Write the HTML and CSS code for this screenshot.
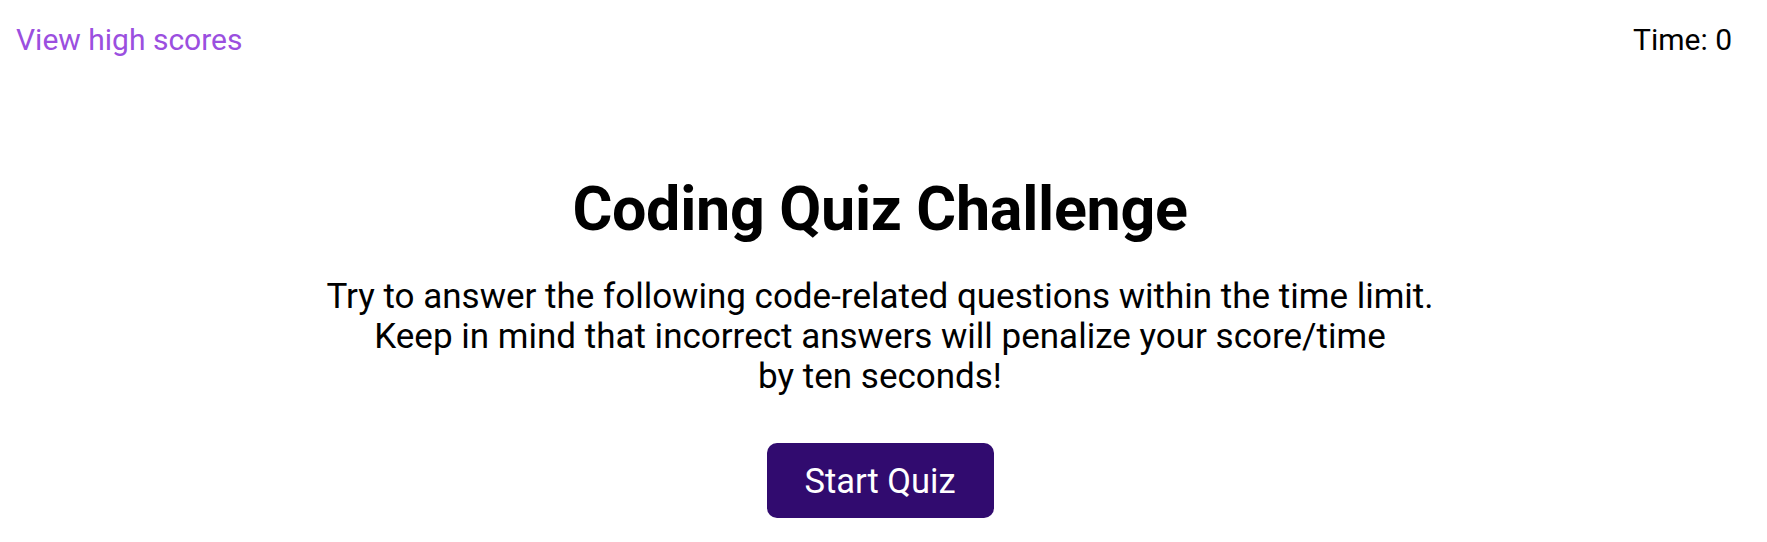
FILE: index.html
```html
<!DOCTYPE html>
<html lang="en">
<head>
<meta charset="utf-8">
<title>Coding Quiz</title>
<link rel="stylesheet" href="styles.css">
</head>
<body>
<header class="topbar">
  <a class="highscores" href="#">View high scores</a>
  <div class="timer">Time: <span>0</span></div>
</header>
<main class="intro">
  <h1 class="title">Coding Quiz Challenge</h1>
  <p class="lead">Try to answer the following code-related questions within the time limit.<br>Keep in mind that incorrect answers will penalize your score/time<br>by ten seconds!</p>
  <button class="start" type="button">Start Quiz</button>
</main>
</body>
</html>
```
FILE: styles.css
```css
html, body {
  margin: 0;
  padding: 0;
  background: #ffffff;
}
body {
  font-family: Roboto, "Liberation Sans", sans-serif;
  color: #000000;
}
.topbar {
  display: flex;
  justify-content: space-between;
  align-items: flex-start;
  padding: 22px 35px 0 16px;
  font-size: 30px;
  line-height: 36px;
}
.highscores {
  color: #9b4fdf;
  text-decoration: none;
}
.intro {
  display: flex;
  flex-direction: column;
  align-items: center;
  text-align: center;
  padding-right: 7px;
}
.title {
  margin: 114px 0 0;
  font-size: 61px;
  font-weight: 700;
  letter-spacing: -0.3px;
  line-height: 75px;
}
.lead {
  margin: 30px 0 0;
  font-size: 35px;
  line-height: 40px;
}
.start {
  margin-top: 46px;
  width: 227px;
  height: 75px;
  border: none;
  border-radius: 10px;
  background: #310b6f;
  color: #ffffff;
  font-family: Roboto, "Liberation Sans", sans-serif;
  font-size: 34.5px;
  cursor: pointer;
}
```
